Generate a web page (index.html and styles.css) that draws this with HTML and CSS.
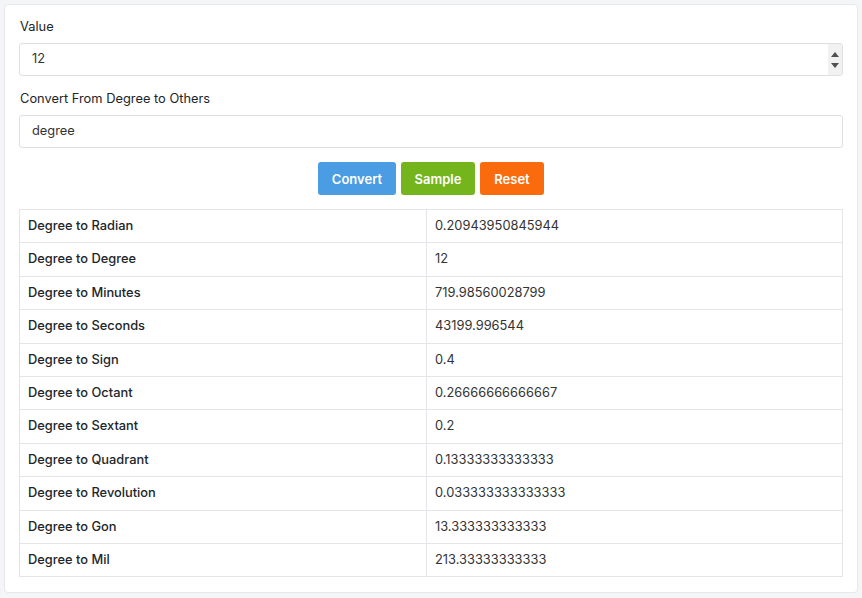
FILE: index.html
```html
<!DOCTYPE html>
<html>
<head>
<meta charset="utf-8">
<link rel="stylesheet" href="styles.css">
</head>
<body>
<div class="card">
  <label class="label">Value</label>
  <div class="field">
    <input class="input" type="text" value="12">
    <span class="spinner"><span class="tri up"></span><span class="tri down"></span></span>
  </div>
  <label class="label second">Convert From Degree to Others</label>
  <div class="field">
    <input class="input" type="text" value="degree">
  </div>
  <div class="buttons">
    <button class="btn blue">Convert</button>
    <button class="btn green">Sample</button>
    <button class="btn orange">Reset</button>
  </div>
  <table class="results">
    <tr><td class="name">Degree to Radian</td><td>0.20943950845944</td></tr>
    <tr><td class="name">Degree to Degree</td><td>12</td></tr>
    <tr><td class="name">Degree to Minutes</td><td>719.98560028799</td></tr>
    <tr><td class="name">Degree to Seconds</td><td>43199.996544</td></tr>
    <tr><td class="name">Degree to Sign</td><td>0.4</td></tr>
    <tr><td class="name">Degree to Octant</td><td>0.26666666666667</td></tr>
    <tr><td class="name">Degree to Sextant</td><td>0.2</td></tr>
    <tr><td class="name">Degree to Quadrant</td><td>0.13333333333333</td></tr>
    <tr><td class="name">Degree to Revolution</td><td>0.033333333333333</td></tr>
    <tr><td class="name">Degree to Gon</td><td>13.333333333333</td></tr>
    <tr><td class="name">Degree to Mil</td><td>213.33333333333</td></tr>
  </table>
</div>
</body>
</html>
```
FILE: styles.css
```css
html, body {
  margin: 0;
  padding: 0;
  background: #f4f5f7;
}
body {
  padding: 4px 4px 0 4px;
  font-family: Inter, "Liberation Sans", sans-serif;
  font-size: 12.85px;
  color: #212529;
}
.card {
  background: #fff;
  border: 1px solid #e6e8eb;
  border-radius: 4px;
  padding: 14px 14px 15px 14px;
  box-sizing: border-box;
  width: 854px;
}
.label {
  display: block;
  line-height: 16px;
  margin-bottom: 8px;
  margin-left: 1px;
  color: #212529;
}
.label.second {
  margin-top: 15px;
}
.field {
  position: relative;
}
.input {
  display: block;
  width: 100%;
  box-sizing: border-box;
  height: 33px;
  border: 1px solid #dcdfe3;
  border-radius: 3px;
  padding: 0 12px 2px 12px;
  font-family: Inter, "Liberation Sans", sans-serif;
  font-size: 12.85px;
  color: #333;
  background: #fff;
  outline: none;
}
.spinner {
  position: absolute;
  right: 1px;
  top: 1px;
  width: 14px;
  height: 31px;
  background: #f1f1f1;
  display: flex;
  flex-direction: column;
  align-items: center;
  justify-content: center;
  gap: 6px;
}
.tri {
  width: 0;
  height: 0;
  border-left: 4px solid transparent;
  border-right: 4px solid transparent;
}
.tri.up {
  border-bottom: 5px solid #505050;
}
.tri.down {
  border-top: 5px solid #505050;
}
.buttons {
  display: flex;
  justify-content: center;
  gap: 5px;
  margin-top: 14px;
  margin-bottom: 14px;
}
.btn {
  height: 33px;
  border: none;
  border-radius: 3px;
  color: #fff;
  font-family: Inter, "Liberation Sans", sans-serif;
  font-size: 13px;
  font-weight: 600;
  padding: 0 10px;
}
.blue { background: #4a9de2; width: 78px; }
.green { background: #74b41c; width: 74px; }
.orange { background: #fa6b0d; width: 64px; }
.results {
  width: 100%;
  border-collapse: collapse;
  border: 1px solid #e3e5e8;
}
.results td {
  border: 1px solid #e3e5e8;
  padding: 7px 8px;
  line-height: 18.4px;
  color: #333;
  text-align: left;
}
.results td.name {
  width: 390px;
  font-weight: 500;
  color: #212529;
}
```
